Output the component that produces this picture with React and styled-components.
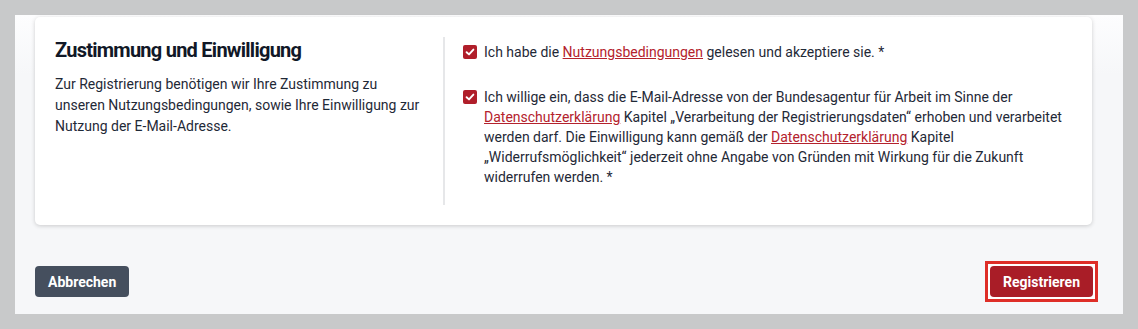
import React from 'react'
import styled, { createGlobalStyle } from 'styled-components'

const Global = createGlobalStyle`
  html, body {
    margin: 0;
    padding: 0;
    background: #c8c9ca;
    font-family: Roboto, "Liberation Sans", sans-serif;
  }
`

const Check = () => (
  <Box>
    <svg width="10" height="10" viewBox="0 0 10 10">
      <path d="M1.6 5.2 L4 7.4 L8.4 2.6" fill="none" stroke="#fff" strokeWidth="1.9" strokeLinecap="round" strokeLinejoin="round" />
    </svg>
  </Box>
)

const App = () => {
  return (
    <>
      <Global />
      <Page>
        <Panel>
          <Card>
            <Left>
              <Title>Zustimmung und Einwilligung</Title>
              <Desc>
                Zur Registrierung benötigen wir Ihre Zustimmung zu unseren Nutzungsbedingungen, sowie Ihre
                Einwilligung zur Nutzung der E-Mail-Adresse.
              </Desc>
            </Left>
            <Right>
              <Item>
                <Check />
                <Label>
                  Ich habe die <Link>Nutzungsbedingungen</Link> gelesen und akzeptiere sie. *
                </Label>
              </Item>
              <Item>
                <Check />
                <Label>
                  Ich willige ein, dass die E-Mail-Adresse von der Bundesagentur für Arbeit im Sinne der{' '}
                  <Link>Datenschutzerklärung</Link> Kapitel „Verarbeitung der Registrierungsdaten“ erhoben und
                  verarbeitet werden darf. Die Einwilligung kann gemäß der <Link>Datenschutzerklärung</Link>{' '}
                  Kapitel „Widerrufsmöglichkeit“ jederzeit ohne Angabe von Gründen mit Wirkung für die Zukunft
                  widerrufen werden. *
                </Label>
              </Item>
            </Right>
          </Card>
          <Actions>
            <Button>Abbrechen</Button>
            <Focus>
              <Button primary>Registrieren</Button>
            </Focus>
          </Actions>
        </Panel>
      </Page>
    </>
  )
}

export default App

const Page = styled.div`
  width: 1138px;
  height: 329px;
  padding: 15px;
  box-sizing: border-box;
`
const Panel = styled.div`
  width: 1108px;
  height: 299px;
  background: linear-gradient(#fdfdfe, #f6f7f9 60px);
  padding: 2px 31px 0 20px;
  box-sizing: border-box;
`
const Card = styled.div`
  height: 208px;
  background: #fff;
  border-radius: 5px;
  box-shadow: 0 1px 4px rgba(0, 0, 0, 0.18);
  display: flex;
  padding: 20px 0;
  box-sizing: border-box;
`
const Left = styled.div`
  width: 410px;
  padding: 0 20px;
  box-sizing: border-box;
  border-right: 2px solid #e6e7e9;
`
const Title = styled.div`
  font-size: 20px;
  font-weight: 700;
  color: #111827;
  letter-spacing: -0.75px;
  line-height: 26px;
  margin-bottom: 11px;
`
const Desc = styled.div`
  font-size: 14px;
  line-height: 21px;
  color: #1f2937;
`
const Right = styled.div`
  flex: 1;
  padding: 5px 20px 0 18px;
  display: flex;
  flex-direction: column;
  gap: 25px;
`
const Item = styled.div`
  display: flex;
  align-items: flex-start;
  gap: 7px;
`
const Box = styled.div`
  flex: none;
  width: 14px;
  height: 14px;
  margin-top: 3px;
  border-radius: 2px;
  background: #b01e2a;
  display: flex;
  align-items: center;
  justify-content: center;
`
const Label = styled.div`
  font-size: 14px;
  line-height: 20px;
  color: #1f2937;
`
const Link = styled.a`
  color: #b4222d;
  text-decoration: underline;
  text-underline-offset: 1px;
  cursor: pointer;
`
const Actions = styled.div`
  display: flex;
  justify-content: space-between;
  align-items: center;
  margin-top: 36px;
  margin-right: -6px;
`
const Focus = styled.div`
  border: 3px solid #de2e28;
  padding: 2px;
  background: #fff;
  display: flex;
`
const Button = styled.button`
  height: 31px;
  padding: 0 13px;
  border: none;
  border-radius: 4px;
  background: ${p => (p.primary ? '#a91d27' : '#454f5e')};
  color: #fff;
  font-family: Roboto, "Liberation Sans", sans-serif;
  font-size: 14px;
  font-weight: 700;
  cursor: pointer;
`
